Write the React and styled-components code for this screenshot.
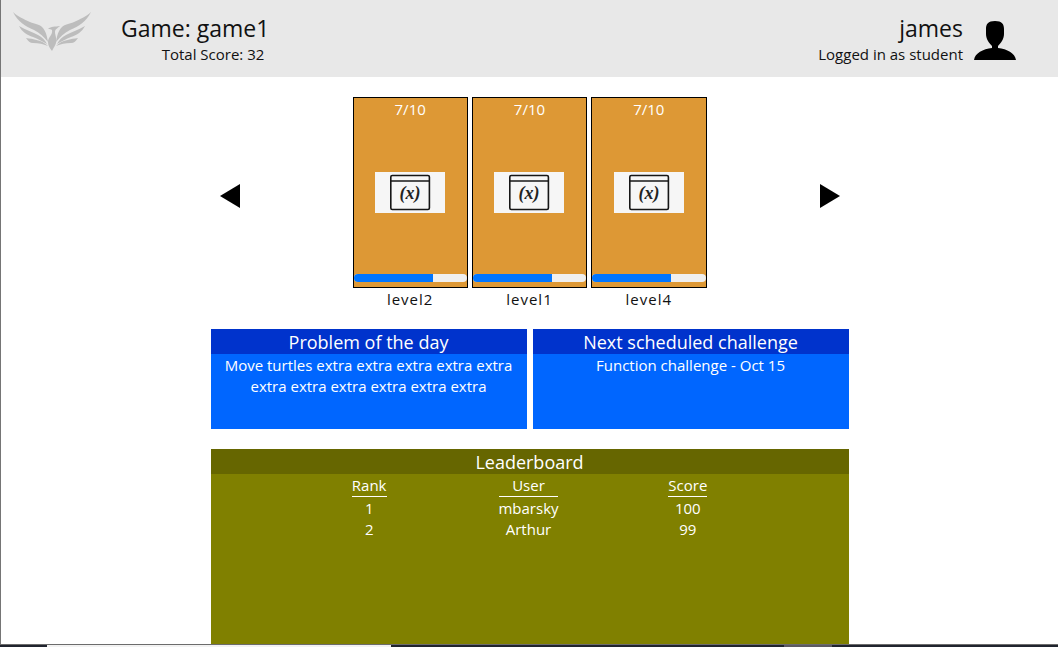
import React from "react";
import styled, { createGlobalStyle } from "styled-components";

const GlobalStyle = createGlobalStyle`
  *, *::before, *::after { box-sizing: border-box; }
  body {
    margin: 0;
    background: #fff;
    color: #111;
    font-family: "Segoe UI", "Open Sans", "Noto Sans", sans-serif;
    font-size: 15px;
    line-height: 21px;
  }
  h1, h2, p { margin: 0; font-weight: inherit; }
`;

const Page = styled.div`
  display: flex;
  flex-direction: column;
  min-height: 100vh;
  border-left: 1px solid #757575;
`;

const Header = styled.header`
  display: flex;
  justify-content: space-between;
  align-items: flex-start;
  min-height: 77px;
  padding: 12px 42px 0 12px;
  background: #e8e8e8;
`;

const HeaderGroup = styled.div`
  display: flex;
  align-items: flex-start;
  gap: ${({ $gap }) => $gap}px;
`;

const Logo = styled.svg`
  width: 78px;
  height: 39px;
  fill: #bdbdbd;
`;

const Avatar = styled.svg`
  width: 42px;
  height: 40px;
  margin-top: 9px;
`;

const HeaderText = styled.div`
  padding-top: 2px;
  text-align: right;
`;

const Title = styled.h1`
  font-size: 23px;
  line-height: 29px;
`;

const Subtitle = styled.p`
  padding: 1px ${({ $inset }) => $inset || 0}px 0 0;
`;

const Main = styled.main`
  display: flex;
  flex: 1;
  flex-direction: column;
  gap: 20px;
  width: 100%;
  max-width: 638px;
  margin: 0 auto;
  padding-top: 20px;
`;

const Carousel = styled.section`
  display: flex;
  justify-content: space-between;
  padding: 0 9px;
`;

const ArrowButton = styled.button`
  display: flex;
  align-self: center;
  margin-bottom: 14px;
  padding: 0;
  border: 0;
  background: none;
  cursor: pointer;
`;

const Levels = styled.div`
  display: grid;
  grid-template-columns: repeat(3, 1fr);
  gap: 4px;
  width: 354px;
`;

const Level = styled.article`
  display: flex;
  flex-direction: column;
  text-align: center;
`;

const Card = styled.div`
  display: flex;
  flex-direction: column;
  justify-content: space-between;
  align-items: center;
  height: 191px;
  padding: 1px 0 5px;
  border: 1px solid #000;
  background: #dd9835;
  color: #fff;
`;

const Picture = styled.svg`
  width: 70px;
  height: 41px;
  margin-bottom: 10px;
`;

const Progress = styled.progress`
  display: block;
  width: 100%;
  height: 8px;
  border: 0;
  border-radius: 4px;
  overflow: hidden;
  appearance: none;

  &::-webkit-progress-bar { background: #efefef; }
  &::-webkit-progress-value { background: #0075ff; }
`;

const LevelName = styled.p`
  padding-top: 1px;
  letter-spacing: 1px;
  line-height: 20px;
`;

const Panels = styled.div`
  display: grid;
  grid-template-columns: 1fr 1fr;
  gap: 6px;
`;

const Panel = styled.section`
  flex: ${({ $grow }) => ($grow ? 1 : "none")};
  min-height: 100px;
  background: ${({ $tone }) => ($tone === "olive" ? "#808000" : "#0066ff")};
  color: #fff;
  text-align: center;
`;

const PanelTitle = styled.h2`
  padding-top: 1px;
  background: ${({ $tone }) => ($tone === "olive" ? "#666600" : "#0033cc")};
  font-size: 18px;
  line-height: 24px;
`;

const PanelText = styled.p`
  padding: 1px 10px;
`;

const Scores = styled.table`
  width: calc(100% - 160px);
  margin: 1px 81px 0 79px;
  border-spacing: 0;
  table-layout: fixed;

  th, td { padding: 0; font-weight: 400; }
  th { padding-bottom: 1px; }
`;

const Heading = styled.span`
  display: block;
  width: ${({ $width }) => $width}px;
  margin: 0 auto;
  border-bottom: 1px solid #fff;
`;

const Taskbar = styled.footer`
  display: grid;
  grid-template-columns: 47px 344px 393px 48px 1fr;
  height: 3px;
  margin-left: -1px;
  border-top: 1px solid #6c6c6c;
  background: #20242e;
`;

const TaskbarItem = styled.span`
  grid-column: ${({ $column }) => $column};
  background: ${({ $active }) => ($active ? "#f2f2f2" : "#5c5a62")};
`;

const wing = (
  <>
    <path d="M0 0 C5 5 11 7 17 10 C22 12 26 12 29 15 C33 19 34 24 35 30 C31 25 27 21 21 18 C12 14 5 10 0 0Z" />
    <path d="M6 14 C13 18 20 20 25 23 C29 25 32 28 34 32 C29 29 25 27 20 25 C14 23 9 20 6 14Z" />
    <path d="M13 26 C20 27 29 28 35 34 C30 32 26 31 20 31 C17 31 15 29 13 26Z" />
  </>
);

const levels = [
  { name: "level2", solved: 7, total: 10 },
  { name: "level1", solved: 7, total: 10 },
  { name: "level4", solved: 7, total: 10 },
];

const scores = [
  { rank: 1, user: "mbarsky", score: 100 },
  { rank: 2, user: "Arthur", score: 99 },
];

function Arrow({ label, points }) {
  return (
    <ArrowButton type="button" aria-label={label}>
      <svg width="22" height="24" viewBox="0 0 22 24">
        <polygon points={points} />
      </svg>
    </ArrowButton>
  );
}

function LevelCard({ name, solved, total }) {
  return (
    <Level>
      <Card>
        <span>{solved}/{total}</span>
        <Picture viewBox="0 0 70 41" aria-hidden="true">
          <rect width="70" height="41" fill="#f6f6f6" />
          <g fill="none" stroke="#161616" strokeWidth="1.6">
            <rect x="15.8" y="3.5" width="38.6" height="34" rx="1.5" />
            <path d="M16 9H54" />
          </g>
          <text
            x="35"
            y="27"
            textAnchor="middle"
            fontFamily="Liberation Serif, serif"
            fontSize="18"
            fontStyle="italic"
            fontWeight="700"
            fill="#222"
          >
            (x)
          </text>
        </Picture>
        <Progress value={solved} max={total} aria-label={`${name} progress`} />
      </Card>
      <LevelName>{name}</LevelName>
    </Level>
  );
}

export default function App() {
  return (
    <>
      <GlobalStyle />
      <Page>
        <Header>
          <HeaderGroup $gap={30}>
            <Logo viewBox="0 0 78 39" aria-hidden="true">
              {wing}
              <g transform="translate(78 0) scale(-1 1)">{wing}</g>
              <path d="M35 17 C38 14 42 15 47 14 C45 16 42 17 42 20 C42 23 44 26 43 31 C42 34 41 35 39 39 C37 36 35 34 35 30 C35 25 40 23 39 18 C38 17 37 17 35 17Z" />
            </Logo>
            <HeaderText>
              <Title>Game: game1</Title>
              <Subtitle $inset={5}>Total Score: 32</Subtitle>
            </HeaderText>
          </HeaderGroup>
          <HeaderGroup $gap={11}>
            <HeaderText>
              <Title>james</Title>
              <Subtitle>Logged in as student</Subtitle>
            </HeaderText>
            <Avatar viewBox="0 0 42 40" aria-hidden="true">
              <path d="M21 0 C28 0 30 3 30 8 V13 C30 18 27 22 24 25 V27 C33 28 41 32 42 39 H0 C1 32 9 28 18 27 V25 C15 22 12 18 12 13 V8 C12 3 14 0 21 0Z" />
            </Avatar>
          </HeaderGroup>
        </Header>

        <Main>
          <Carousel>
            <Arrow label="Previous levels" points="0,12 20,0 20,24" />
            <Levels>
              {levels.map((level) => (
                <LevelCard key={level.name} {...level} />
              ))}
            </Levels>
            <Arrow label="Next levels" points="2,0 22,12 2,24" />
          </Carousel>

          <Panels>
            <Panel>
              <PanelTitle>Problem of the day</PanelTitle>
              <PanelText>
                Move turtles extra extra extra extra extra extra extra extra extra extra extra
              </PanelText>
            </Panel>
            <Panel>
              <PanelTitle>Next scheduled challenge</PanelTitle>
              <PanelText>Function challenge - Oct 15</PanelText>
            </Panel>
          </Panels>

          <Panel $tone="olive" $grow>
            <PanelTitle $tone="olive">Leaderboard</PanelTitle>
            <Scores>
              <thead>
                <tr>
                  <th scope="col"><Heading $width={35}>Rank</Heading></th>
                  <th scope="col"><Heading $width={59}>User</Heading></th>
                  <th scope="col"><Heading $width={39}>Score</Heading></th>
                </tr>
              </thead>
              <tbody>
                {scores.map((row) => (
                  <tr key={row.rank}>
                    <td>{row.rank}</td>
                    <td>{row.user}</td>
                    <td>{row.score}</td>
                  </tr>
                ))}
              </tbody>
            </Scores>
          </Panel>
        </Main>

        <Taskbar>
          <TaskbarItem $column={2} $active />
          <TaskbarItem $column={4} />
        </Taskbar>
      </Page>
    </>
  );
}
